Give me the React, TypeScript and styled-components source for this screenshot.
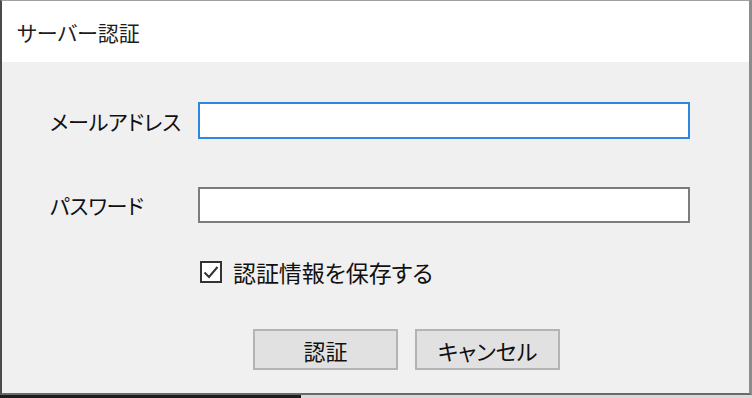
import React from "react";
import styled, { createGlobalStyle } from "styled-components";

const GlobalStyle = createGlobalStyle`
  html, body {
    margin: 0;
    padding: 0;
    background: #2a2a2a;
  }
  body {
    font-family: "Noto Sans CJK JP", "Noto Sans", sans-serif;
    font-feature-settings: "palt";
    color: #111111;
  }
`;

const Screen = styled.div`
  width: 752px;
  height: 398px;
  overflow: hidden;
  background: linear-gradient(90deg, #1c1c1c 0 40%, #d9d9d9 40% 100%);
`;

const Window = styled.div`
  width: 752px;
  height: 395px;
  box-sizing: border-box;
  border-left: 2px solid #4a4a4a;
  border-top: 1px solid #a0a0a0;
  border-right: 3px solid #8c8c8c;
  border-bottom: 2px solid #6a6a6a;
  background: #f0f0f0;
  display: flex;
  flex-direction: column;
`;

const TitleBar = styled.div`
  height: 61px;
  background: #ffffff;
  display: flex;
  align-items: center;
  padding-left: 15px;
  font-size: 21px;
  color: #1e1e1e;
`;

const Body = styled.div`
  flex: 1;
  display: grid;
  grid-template-columns: 148px 492px;
  grid-template-rows: 37px 48px 36px 37px 24px 45px 41px;
  padding: 40px 0 0 48px;
`;

const Label = styled.label`
  font-size: 21px;
  display: flex;
  align-items: center;
  letter-spacing: -0.2px;
`;

const Input = styled.input<{ $focused?: boolean }>`
  box-sizing: border-box;
  width: 492px;
  height: 100%;
  margin: 0;
  border: 2px solid ${(p) => (p.$focused ? "#2f87e0" : "#7c7c7c")};
  background: #ffffff;
  outline: none;
  font-size: 18px;
  font-family: inherit;
`;

const Gap = styled.div`
  grid-column: 1 / span 2;
`;

const CheckRow = styled.label`
  grid-column: 2;
  display: flex;
  align-items: center;
  gap: 11px;
  padding-left: 2px;
  font-size: 23px;
  letter-spacing: -0.1px;
`;

const CheckBox = styled.span`
  width: 22px;
  height: 22px;
  box-sizing: border-box;
  border: 2px solid #333333;
  background: #ffffff;
  display: flex;
  align-items: center;
  justify-content: center;
`;

const ButtonRow = styled.div`
  grid-column: 1 / span 2;
  display: flex;
  gap: 17px;
  padding-left: 203px;
`;

const Button = styled.button`
  width: 145px;
  height: 41px;
  box-sizing: border-box;
  border: 2px solid #b4b4b4;
  background: #e1e1e1;
  font-family: inherit;
  font-feature-settings: "palt";
  font-size: 22px;
  color: #111111;
  padding: 0;
`;

export default function App() {
  return (
    <Screen>
      <GlobalStyle />
      <Window>
        <TitleBar>サーバー認証</TitleBar>
        <Body>
          <Label>メールアドレス</Label>
          <Input $focused />
          <Gap />
          <Label>パスワード</Label>
          <Input type="password" />
          <Gap />
          <CheckRow>
            <CheckBox>
              <svg width="16" height="14" viewBox="0 0 16 14">
                <path d="M1.5 7.5 L6 12 L14.5 2" fill="none" stroke="#333" strokeWidth="2" />
              </svg>
            </CheckBox>
            認証情報を保存する
          </CheckRow>
          <Gap />
          <ButtonRow>
            <Button>認証</Button>
            <Button>キャンセル</Button>
          </ButtonRow>
        </Body>
      </Window>
    </Screen>
  );
}
